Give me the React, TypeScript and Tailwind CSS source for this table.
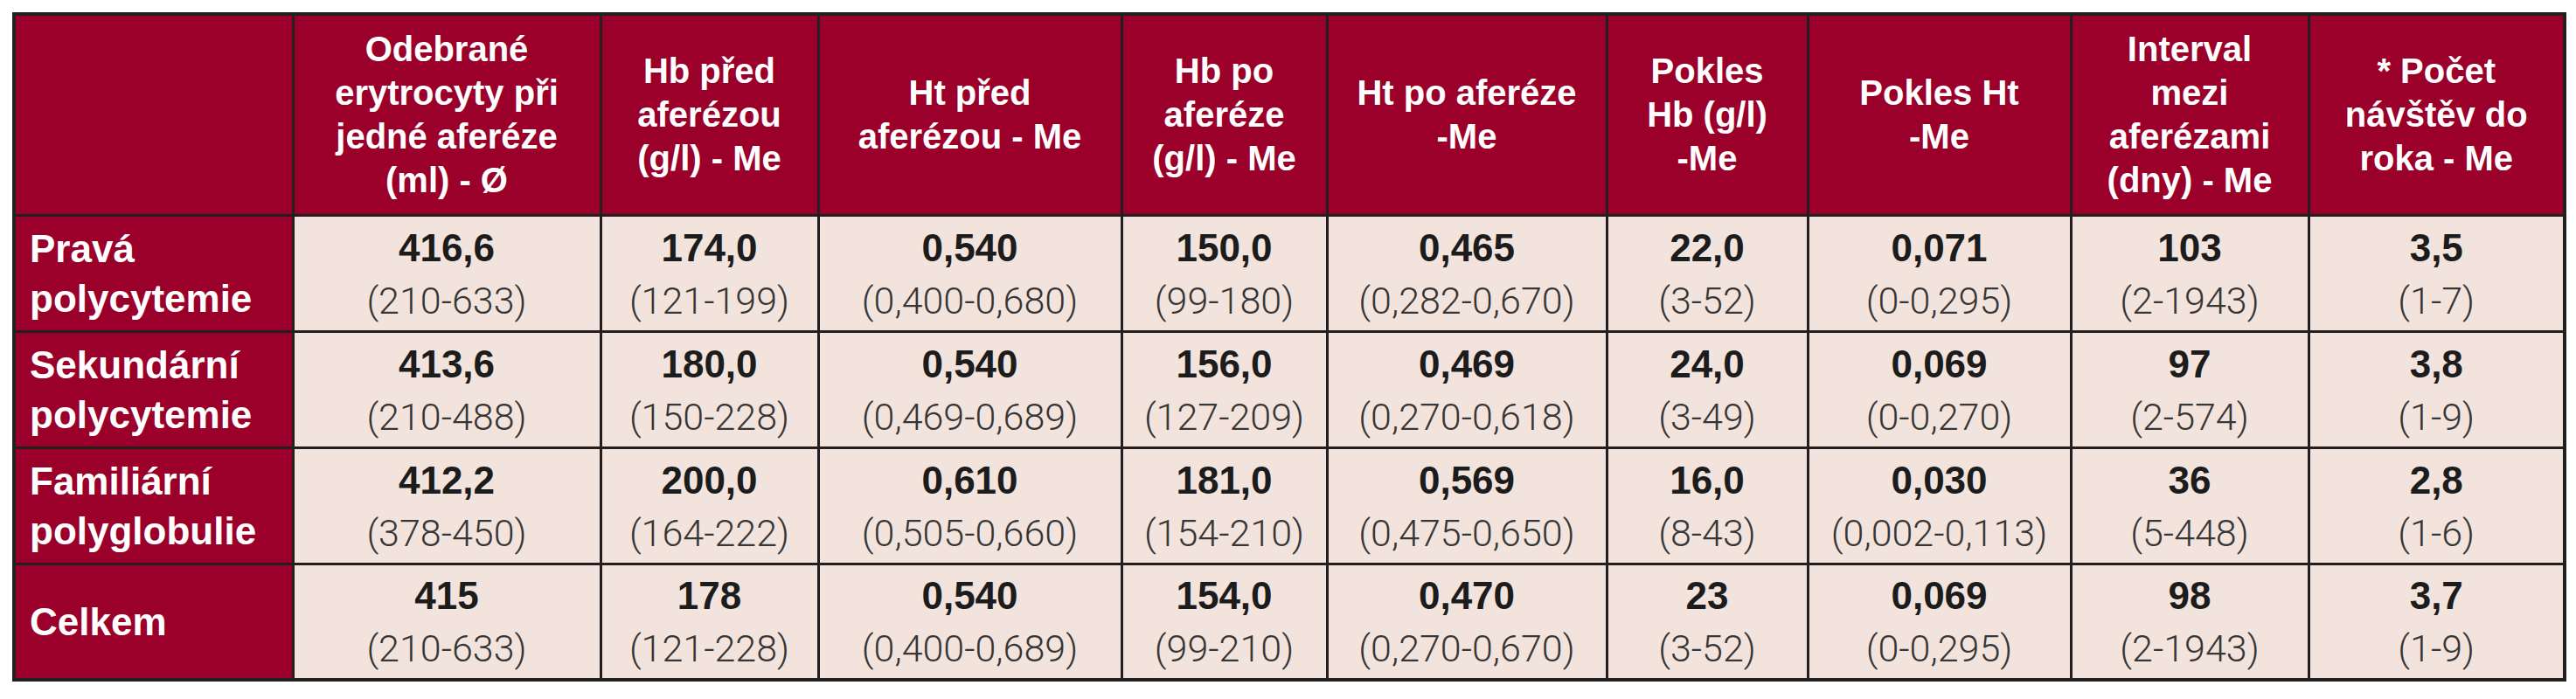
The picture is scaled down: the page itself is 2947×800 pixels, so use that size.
import React from 'react'

interface ICell {
    value: string;
    range: string;
}

interface IRow {
    label: string[];
    cells: ICell[];
}

const headers: string[][] = [
    ['Odebrané', 'erytrocyty při', 'jedné aferéze', '(ml) - Ø'],
    ['Hb před', 'aferézou', '(g/l) - Me'],
    ['Ht před', 'aferézou - Me'],
    ['Hb po', 'aferéze', '(g/l) - Me'],
    ['Ht po aferéze', '-Me'],
    ['Pokles', 'Hb (g/l)', '-Me'],
    ['Pokles Ht', '-Me'],
    ['Interval', 'mezi', 'aferézami', '(dny) - Me'],
    ['* Počet', 'návštěv do', 'roka - Me'],
];

const colWidths = [
    'w-[319px]', 'w-[352px]', 'w-[249px]', 'w-[347px]', 'w-[235px]',
    'w-[320px]', 'w-[230px]', 'w-[301px]', 'w-[272px]', 'w-[293px]',
];

const rows: IRow[] = [
    {
        label: ['Pravá', 'polycytemie'],
        cells: [
            { value: '416,6', range: '(210-633)' },
            { value: '174,0', range: '(121-199)' },
            { value: '0,540', range: '(0,400-0,680)' },
            { value: '150,0', range: '(99-180)' },
            { value: '0,465', range: '(0,282-0,670)' },
            { value: '22,0', range: '(3-52)' },
            { value: '0,071', range: '(0-0,295)' },
            { value: '103', range: '(2-1943)' },
            { value: '3,5', range: '(1-7)' },
        ],
    },
    {
        label: ['Sekundární', 'polycytemie'],
        cells: [
            { value: '413,6', range: '(210-488)' },
            { value: '180,0', range: '(150-228)' },
            { value: '0,540', range: '(0,469-0,689)' },
            { value: '156,0', range: '(127-209)' },
            { value: '0,469', range: '(0,270-0,618)' },
            { value: '24,0', range: '(3-49)' },
            { value: '0,069', range: '(0-0,270)' },
            { value: '97', range: '(2-574)' },
            { value: '3,8', range: '(1-9)' },
        ],
    },
    {
        label: ['Familiární', 'polyglobulie'],
        cells: [
            { value: '412,2', range: '(378-450)' },
            { value: '200,0', range: '(164-222)' },
            { value: '0,610', range: '(0,505-0,660)' },
            { value: '181,0', range: '(154-210)' },
            { value: '0,569', range: '(0,475-0,650)' },
            { value: '16,0', range: '(8-43)' },
            { value: '0,030', range: '(0,002-0,113)' },
            { value: '36', range: '(5-448)' },
            { value: '2,8', range: '(1-6)' },
        ],
    },
    {
        label: ['Celkem'],
        cells: [
            { value: '415', range: '(210-633)' },
            { value: '178', range: '(121-228)' },
            { value: '0,540', range: '(0,400-0,689)' },
            { value: '154,0', range: '(99-210)' },
            { value: '0,470', range: '(0,270-0,670)' },
            { value: '23', range: '(3-52)' },
            { value: '0,069', range: '(0-0,295)' },
            { value: '98', range: '(2-1943)' },
            { value: '3,7', range: '(1-9)' },
        ],
    },
];

const App = () => {
    return (
        <div className="min-h-screen bg-white pl-[14px] pt-[14px] font-['Liberation_Sans',Arial,sans-serif]">
            <table className="table-fixed border-collapse border-[4px] border-[#231f20]">
                <colgroup>
                    {colWidths.map((w, i) => (
                        <col key={i} className={w} />
                    ))}
                </colgroup>
                <thead>
                    <tr className="h-[230px]">
                        <th className="border-[3px] border-[#231f20] bg-[#9a0029]" />
                        {headers.map((lines, i) => (
                            <th
                                key={i}
                                className="border-[3px] border-[#231f20] bg-[#9a0029] px-2 text-center align-middle text-[40px] font-bold leading-[50px] text-white"
                            >
                                {lines.map((line, j) => (
                                    <div key={j} className="whitespace-nowrap">{line}</div>
                                ))}
                            </th>
                        ))}
                    </tr>
                </thead>
                <tbody>
                    {rows.map((row, i) => (
                        <tr key={i} className="h-[133px]">
                            <td className="border-[3px] border-[#231f20] bg-[#9a0029] pl-[16px] align-middle text-[44px] font-bold leading-[57px] text-white">
                                {row.label.map((line, j) => (
                                    <div key={j} className="whitespace-nowrap">{line}</div>
                                ))}
                            </td>
                            {row.cells.map((cell, j) => (
                                <td
                                    key={j}
                                    className="border-[3px] border-[#231f20] bg-[#f3e3dd] pt-[4px] text-center align-middle"
                                >
                                    <div className="text-[44px] font-bold leading-[58px] text-[#1c1c1c]">
                                        {cell.value}
                                    </div>
                                    <div className="font-['Roboto',sans-serif] text-[43px] font-light leading-[62px] text-[#363636]">
                                        {cell.range}
                                    </div>
                                </td>
                            ))}
                        </tr>
                    ))}
                </tbody>
            </table>
        </div>
    )
}

export default App
